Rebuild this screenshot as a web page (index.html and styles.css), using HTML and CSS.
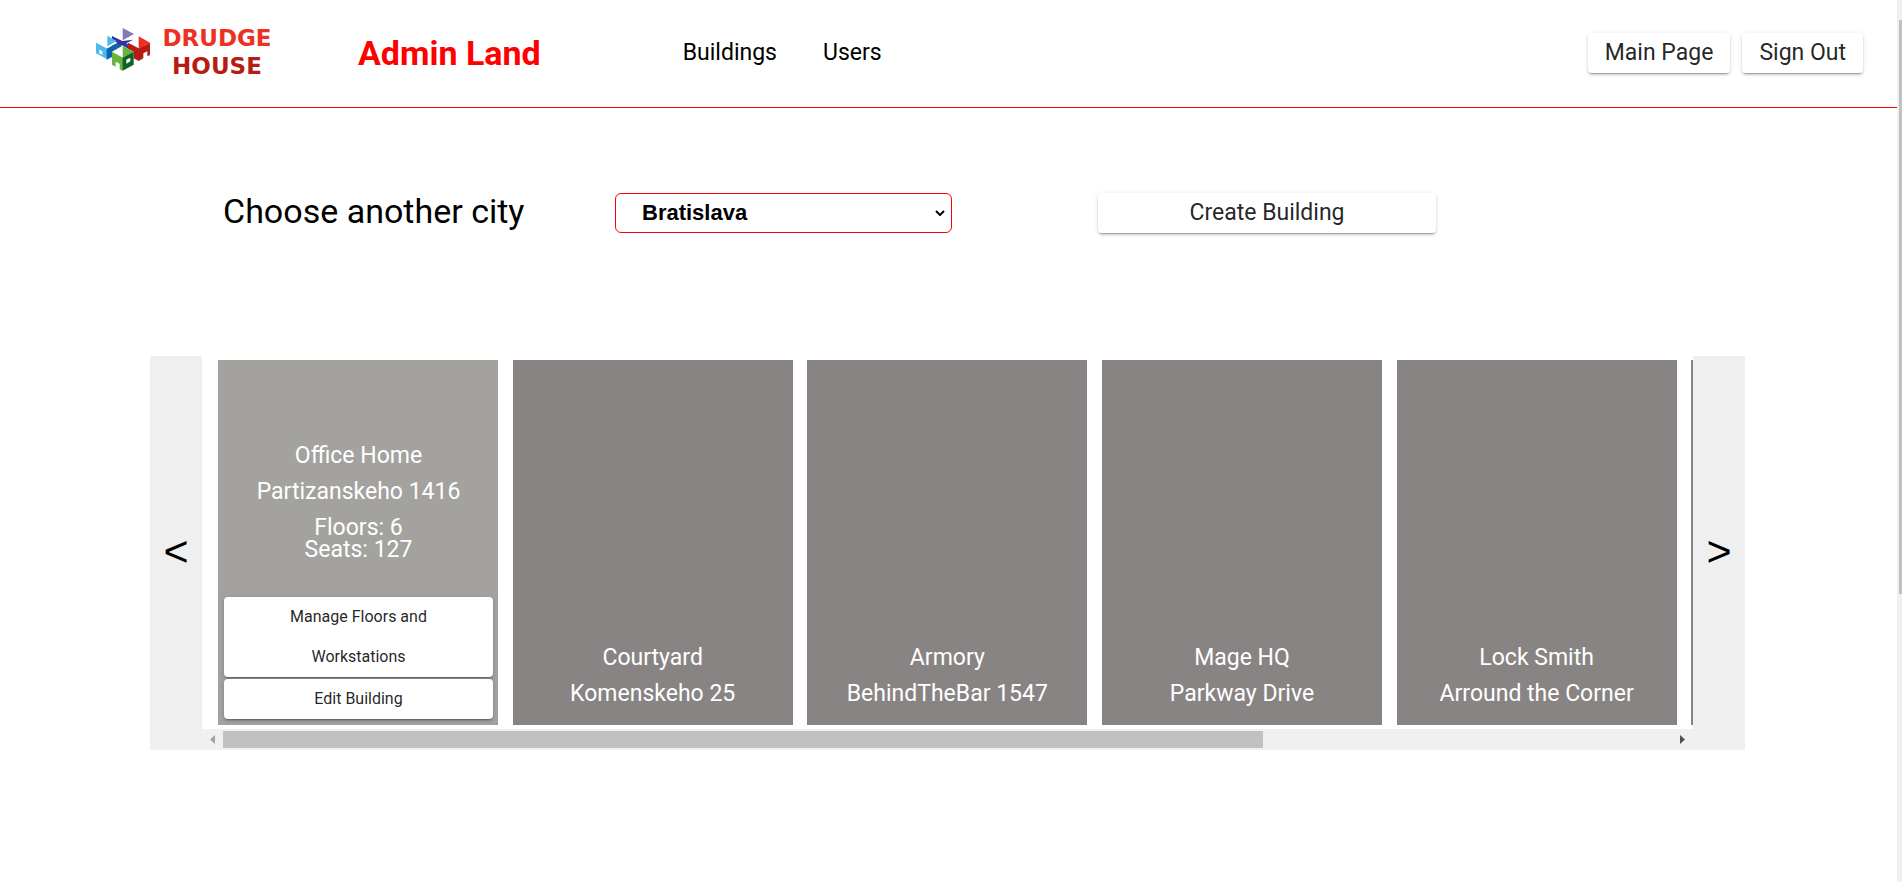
FILE: index.html
```
<!DOCTYPE html>
<html lang="en">
<head>
<meta charset="utf-8">
<title>Drudge House - Admin Land</title>
<link rel="stylesheet" href="styles.css">
</head>
<body>
<div class="page">
  <header class="header">
    <a class="logo" href="#" aria-label="Drudge House">
      <svg class="logo-mark" viewBox="18 24 162 129" aria-hidden="true">
        <path fill="#34309c" d="M66 48l31 15 33-4-21 11 22 13-11 6-23-13-20 8-14-5 20-10-17-9z"/>
        <path fill="#8179b8" d="M98 24l34 18-34 19z"/>
        <path fill="#4fb8ee" d="M52 47l28 16-28 16z"/>
        <path fill="#4fb8ee" d="M18 68l34 18v32l-34-18z"/>
        <path fill="#0d66ab" d="M50 86l30-16 16 8-30 17v16l-16 8z"/>
        <path fill="#fff" d="M28 89l9 5v11l-9-5z"/>
        <path fill="#b51d14" d="M114 68l32 17 34-17v37l-8 4V94l-12 6v15l-14 8-15-8V95l-17-9z"/>
        <path fill="#ee3024" d="M146 49l34 19-34 18z"/>
        <path fill="#69b440" d="M98 77l33 18-33 19z"/>
        <path fill="#69b440" d="M66 95l33 18v40l-10-5v-17l-12-6v15l-11-6z"/>
        <path fill="#0c6423" d="M98 113l33-18v39l-33 18z"/>
        <path fill="#fff" d="M109 119l12-6v11l-12 7z"/>
      </svg>
      <span class="logo-text"><span class="logo-top">DRUDGE</span><span class="logo-bottom">HOUSE</span></span>
    </a>
    <h1 class="title">Admin Land</h1>
    <nav class="nav">
      <a href="#">Buildings</a>
      <a href="#">Users</a>
    </nav>
    <div class="actions">
      <button class="button" type="button">Main Page</button>
      <button class="button" type="button">Sign Out</button>
    </div>
  </header>
  <main>
    <div class="toolbar">
      <label class="city-label" for="city">Choose another city</label>
      <div class="city-field">
        <select class="city" id="city"><option>Bratislava</option></select>
        <svg class="chevron" viewBox="0 0 10 6" aria-hidden="true"><path d="M1 1l4 4 4-4"/></svg>
      </div>
      <button class="button create" type="button">Create Building</button>
    </div>
    <section class="carousel" aria-label="Buildings">
      <button class="arrow" type="button" aria-label="Previous">&lt;</button>
      <div class="viewport">
        <div class="cards">
          <article class="card card-active">
            <p>Office Home</p>
            <p>Partizanskeho 1416</p>
            <p class="stats">Floors: 6<br>Seats: 127</p>
            <div class="card-actions">
              <button class="button small" type="button">Manage Floors and<br>Workstations</button>
              <button class="button small" type="button">Edit Building</button>
            </div>
          </article>
          <article class="card"><p>Courtyard</p><p>Komenskeho 25</p></article>
          <article class="card"><p>Armory</p><p>BehindTheBar 1547</p></article>
          <article class="card"><p>Mage HQ</p><p>Parkway Drive</p></article>
          <article class="card"><p>Lock Smith</p><p>Arround the Corner</p></article>
          <article class="card"></article>
        </div>
        <div class="track">
          <svg class="tick tick-off" viewBox="0 0 5 9" aria-hidden="true"><path d="M5 0v9L0 4.500z"/></svg>
          <div class="rail"><div class="thumb"></div></div>
          <svg class="tick" viewBox="0 0 5 9" aria-hidden="true"><path d="M0 0v9l5-4.500z"/></svg>
        </div>
      </div>
      <button class="arrow" type="button" aria-label="Next">&gt;</button>
    </section>
  </main>
</div>
<div class="page-track"><div class="page-thumb"></div></div>
</body>
</html>
```
FILE: styles.css
```
* { box-sizing: border-box; }

body {
  margin: 0;
  display: flex;
  min-height: 100vh;
  background: #fff;
  color: #000;
  font-family: Roboto, "Liberation Sans", sans-serif;
}

p, h1 { margin: 0; }

.page { flex: 1; min-width: 0; }

.header {
  display: flex;
  align-items: flex-start;
  height: 108px;
  padding: 24px 34px 0 96px;
  border-bottom: 1px solid #f00;
}

.logo {
  display: flex;
  gap: 12px;
  text-decoration: none;
}

.logo-mark { width: 54px; height: 43px; margin-top: 4px; }

.logo-text {
  display: flex;
  flex-direction: column;
  align-items: center;
  width: 110px;
  font: bold 23px/28px "DejaVu Sans", sans-serif;
}

.logo-top { color: #ee3024; }
.logo-bottom { color: #b51d14; }

.title {
  margin-left: 86px;
  color: #f00;
  font-size: 34px;
  line-height: 58px;
}

.nav {
  display: flex;
  gap: 46px;
  margin-left: 142px;
  font-size: 23px;
  line-height: 58px;
}

.nav a { color: #000; text-decoration: none; }

.actions {
  display: flex;
  gap: 12px;
  margin: 9px 0 0 auto;
}

.button {
  padding: 0 17px;
  border: 0;
  border-radius: 4px;
  background: #fff;
  box-shadow: 0 3px 1px -2px rgba(0, 0, 0, .2), 0 2px 2px 0 rgba(0, 0, 0, .14), 0 1px 5px 0 rgba(0, 0, 0, .12);
  color: rgba(0, 0, 0, .87);
  font: 23px/40px Roboto, "Liberation Sans", sans-serif;
}

.toolbar {
  display: flex;
  align-items: center;
  margin: 85px 0 0 223px;
}

.city-label {
  width: 392px;
  padding-bottom: 4px;
  font-size: 34px;
  line-height: 36px;
}

.city-field { position: relative; width: 337px; }

.city {
  appearance: none;
  display: block;
  width: 100%;
  height: 40px;
  padding: 0 26px 2px;
  border: 1px solid #f00;
  border-radius: 6px;
  background: #fff;
  color: #000;
  font: bold 22px "Liberation Sans", Arial, sans-serif;
}

.chevron {
  position: absolute;
  top: 17px;
  right: 7px;
  width: 10px;
  height: 6px;
  fill: none;
  stroke: #000;
  stroke-width: 2;
  pointer-events: none;
}

.create { width: 338px; margin-left: 146px; }

.carousel {
  display: flex;
  margin: 123px 152px 0 150px;
}

.arrow {
  flex: 0 0 52px;
  padding: 0 0 4px;
  border: 0;
  background: #efefef;
  color: #000;
  font: 43px "Liberation Sans", Arial, sans-serif;
}

.viewport { flex: 1; min-width: 0; }

.cards {
  display: flex;
  gap: 1%;
  padding: 4px 8px 4px 16px;
  overflow: hidden;
}

.card {
  display: flex;
  flex: 0 0 280px;
  flex-direction: column;
  justify-content: flex-end;
  height: 365px;
  padding: 0 6px 13px;
  background: #888483;
  color: #fff;
  font-size: 23px;
  line-height: 36px;
  text-align: center;
}

.card-active { padding: 0 5px 6px 6px; background: #a3a29f; }

.stats { padding-top: 7px; line-height: 22px; }

.card-actions {
  display: flex;
  flex-direction: column;
  gap: 2px;
  margin-top: 36px;
}

.small { padding: 0 16px; font-size: 16px; }

.track {
  display: flex;
  align-items: center;
  height: 21px;
  padding: 0 8px;
  background: #f0f0f0;
}

.rail { flex: 1; margin: 0 13px 0 8px; }

.thumb { width: 72%; height: 17px; background: #c1c1c1; }

.tick { width: 5px; height: 9px; fill: #505050; }
.tick-off { fill: #a3a3a3; }

.page-track {
  width: 5px;
  padding: 20px 0 0 2px;
  background: #f0f0f0;
}

.page-thumb { height: 574px; background: #c1c1c1; }
```
